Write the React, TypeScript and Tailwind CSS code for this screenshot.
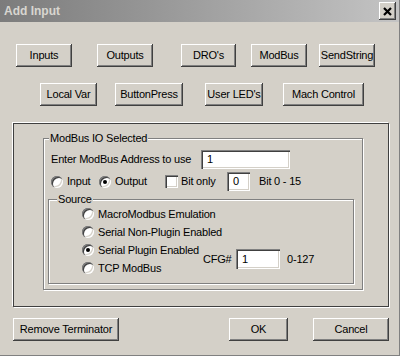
import React from "react";

const btn =
  "h-[23px] flex items-center justify-center bg-[#d4d0c8] text-black shadow-[inset_-1px_-1px_0_#404040,inset_1px_1px_0_#ffffff,inset_-2px_-2px_0_#808080] shrink-0";
const field =
  "bg-white flex items-center pl-[6px] text-black shrink-0 shadow-[inset_1px_1px_0_#808080,inset_2px_2px_0_#404040,inset_-1px_-1px_0_#ffffff,inset_-2px_-2px_0_#d4d0c8]";

function Btn({ label, cls }: { label: string; cls: string }) {
  return <div className={`${btn} ${cls}`}>{label}</div>;
}

function Radio({ checked }: { checked?: boolean }) {
  return (
    <div className="w-[12px] h-[12px] rounded-full bg-white shrink-0 flex items-center justify-center shadow-[inset_1px_1px_0_#808080,inset_2px_2px_0_#404040,inset_-1px_-1px_0_#ffffff,inset_-2px_-2px_0_#d4d0c8]">
      {checked && <div className="w-[4px] h-[4px] rounded-full bg-black" />}
    </div>
  );
}

function SrcRow({ label, checked }: { label: string; checked?: boolean }) {
  return (
    <div className="h-[18px] flex items-center whitespace-nowrap">
      <Radio checked={checked} />
      <span className="ml-[4px]">{label}</span>
    </div>
  );
}

export default function App() {
  return (
    <div
      className="w-[400px] h-[356px] bg-[#d4d0c8] flex flex-col border-r border-b border-[#808080] text-[11px] tracking-[-0.2px] text-black overflow-hidden"
      style={{ fontFamily: '"Liberation Sans", Arial, sans-serif' }}
    >
      {/* Title bar */}
      <div className="h-[22px] bg-linear-to-r from-[#7c7c7c] to-[#c4c4c4] flex items-center shrink-0">
        <span className="ml-[4px] font-bold text-[12px] tracking-normal text-[#d8d6d0]">Add Input</span>
        <div className="ml-auto mr-[3px] w-[17px] h-[18px] flex items-center justify-center bg-[#d4d0c8] shadow-[inset_-1px_-1px_0_#404040,inset_1px_1px_0_#ffffff,inset_-2px_-2px_0_#808080]">
          <svg width="9" height="9" viewBox="0 0 9 9">
            <path d="M1 1 L8 8 M8 1 L1 8" stroke="#000" strokeWidth="2.2" />
          </svg>
        </div>
      </div>

      {/* Row 1 */}
      <div className="flex mt-[22px]">
        <Btn label="Inputs" cls="ml-[16px] w-[56px]" />
        <Btn label="Outputs" cls="ml-[25px] w-[56px]" />
        <Btn label="DRO's" cls="ml-[28px] w-[55px]" />
        <Btn label="ModBus" cls="ml-[15px] w-[56px]" />
        <Btn label="SendString" cls="ml-[12px] w-[56px]" />
      </div>

      {/* Row 2 */}
      <div className="flex mt-[16px]">
        <Btn label="Local Var" cls="ml-[40px] w-[57px]" />
        <Btn label="ButtonPress" cls="ml-[18px] w-[68px]" />
        <Btn label="User LED's" cls="ml-[22px] w-[58px]" />
        <Btn label="Mach Control" cls="ml-[20px] w-[81px]" />
      </div>

      {/* Outer frame */}
      <div className="ml-[13px] mt-[17px] w-[376px] h-[184px] border border-[#404040] shadow-[-1px_-1px_0_#ffffff,1px_1px_0_#ffffff] shrink-0">
        {/* ModBus IO group */}
        <div className="relative ml-[29px] mt-[14px] w-[320px] h-[152px] border border-[#808080] shadow-[inset_1px_1px_0_#ffffff,1px_1px_0_#ffffff] flex flex-col">
          <span className="absolute left-[5px] top-[-8px] bg-[#d4d0c8] px-[1px] leading-[14px]">
            ModBus IO Selected
          </span>
          {/* address row */}
          <div className="flex items-center mt-[11px]">
            <span className="pl-[7px] w-[157px] shrink-0">Enter ModBus Address to use</span>
            <div className={`${field} w-[89px] h-[19px]`}>1</div>
          </div>
          {/* radio row */}
          <div className="flex items-center mt-[3px]">
            <div className="flex items-center ml-[7px] w-[48px] shrink-0">
              <Radio />
              <span className="ml-[4px]">Input</span>
            </div>
            <div className="flex items-center w-[66px] shrink-0">
              <Radio checked />
              <span className="ml-[4px]">Output</span>
            </div>
            <div className="flex items-center w-[62px] shrink-0">
              <div className="w-[13px] h-[13px] bg-white shrink-0 shadow-[inset_1px_1px_0_#808080,inset_2px_2px_0_#404040,inset_-1px_-1px_0_#ffffff,inset_-2px_-2px_0_#d4d0c8]" />
              <span className="ml-[3px]">Bit only</span>
            </div>
            <div className={`${field} w-[23px] h-[19px]`}>0</div>
            <span className="ml-[9px]">Bit 0 - 15</span>
          </div>
          {/* Source group */}
          <div className="relative ml-[4px] mt-[8px] w-[306px] h-[85px] border border-[#808080] shadow-[inset_1px_1px_0_#ffffff,1px_1px_0_#ffffff] flex">
            <span className="absolute left-[8px] top-[-8px] bg-[#d4d0c8] px-[1px] leading-[14px]">Source</span>
            <div className="ml-[33px] mt-[5px] w-[120px] shrink-0 flex flex-col">
              <SrcRow label="MacroModbus Emulation" />
              <SrcRow label="Serial Non-Plugin Enabled" />
              <SrcRow label="Serial Plugin Enabled" checked />
              <SrcRow label="TCP ModBus" />
            </div>
            <div className="flex items-center mt-[49px] h-[20px]">
              <span className="ml-[1px] w-[33px] shrink-0">CFG#</span>
              <div className={`${field} w-[44px] h-[20px]`}>1</div>
              <span className="ml-[7px]">0-127</span>
            </div>
          </div>
        </div>
      </div>

      {/* Bottom buttons */}
      <div className="flex mt-[11px]">
        <Btn label="Remove Terminator" cls="ml-[13px] w-[106px]" />
        <Btn label="OK" cls="ml-[110px] w-[59px]" />
        <Btn label="Cancel" cls="ml-[25px] w-[76px]" />
      </div>
    </div>
  );
}
